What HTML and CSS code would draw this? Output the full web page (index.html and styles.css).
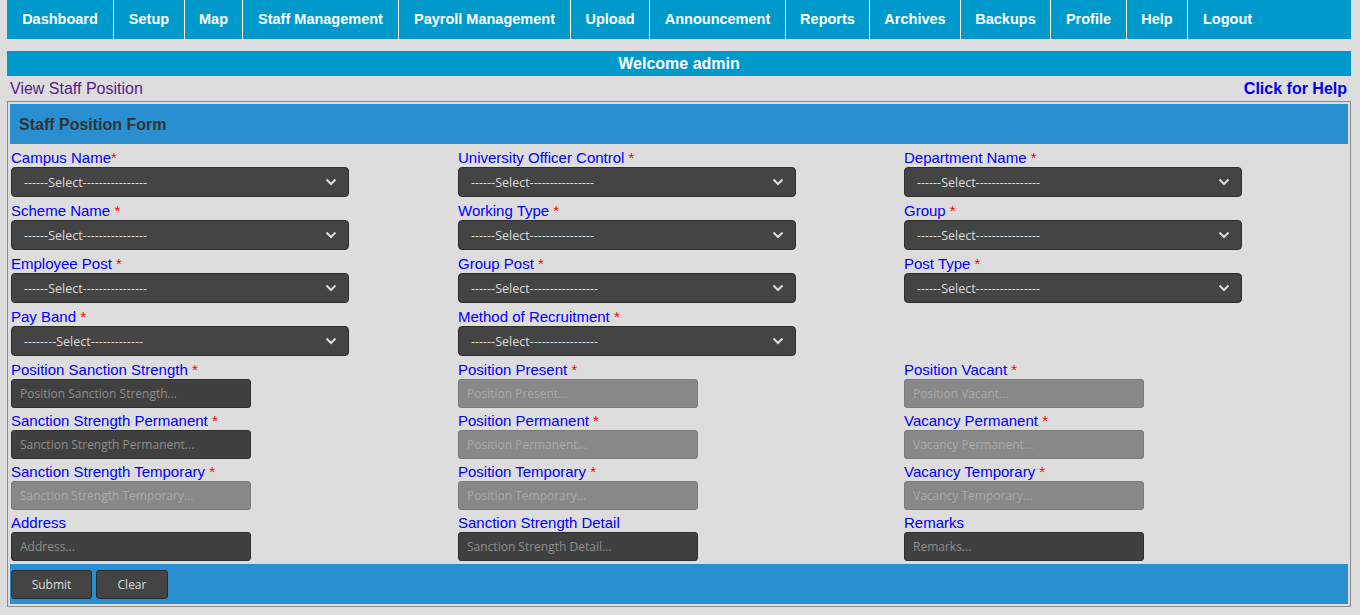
FILE: index.html
```html
<!DOCTYPE html>
<html>
<head>
<meta charset="utf-8">
<title>Staff Position</title>
<link rel="stylesheet" href="styles.css">
</head>
<body>
<div class="wrap">
  <ul class="nav">
    <li class="n-dash">Dashboard</li><li class="n-setup">Setup</li><li class="n-map">Map</li><li class="n-staff">Staff Management</li><li class="n-pay">Payroll Management</li><li class="n-up">Upload</li><li class="n-ann">Announcement</li><li class="n-rep">Reports</li><li class="n-arc">Archives</li><li class="n-bak">Backups</li><li class="n-pro">Profile</li><li class="n-help">Help</li><li class="n-out">Logout</li>
  </ul>
  <div class="welcome">Welcome admin</div>
  <div class="subbar">
    <span class="view">View Staff Position</span>
    <span class="help">Click for Help</span>
  </div>
  <div class="formbox">
    <div class="fhead">Staff Position Form</div>
    <div class="grid">
      <div class="field"><label class="lbl-s">Campus Name<span class="req">*</span></label><select class="sel"><option>------Select----------------</option></select></div>
      <div class="field"><label class="lbl-s">University Officer Control <span class="req">*</span></label><select class="sel"><option>------Select----------------</option></select></div>
      <div class="field"><label class="lbl-s">Department Name <span class="req">*</span></label><select class="sel"><option>------Select----------------</option></select></div>

      <div class="field"><label class="lbl-s">Scheme Name <span class="req">*</span></label><select class="sel"><option>------Select----------------</option></select></div>
      <div class="field"><label class="lbl-s">Working Type <span class="req">*</span></label><select class="sel"><option>------Select----------------</option></select></div>
      <div class="field"><label class="lbl-s">Group <span class="req">*</span></label><select class="sel"><option>------Select----------------</option></select></div>

      <div class="field"><label class="lbl-s">Employee Post <span class="req">*</span></label><select class="sel"><option>------Select----------------</option></select></div>
      <div class="field"><label class="lbl-s">Group Post <span class="req">*</span></label><select class="sel"><option>------Select-----------------</option></select></div>
      <div class="field"><label class="lbl-s">Post Type <span class="req">*</span></label><select class="sel"><option>------Select----------------</option></select></div>

      <div class="field"><label class="lbl-s">Pay Band <span class="req">*</span></label><select class="sel"><option>--------Select-------------</option></select></div>
      <div class="field"><label class="lbl-s">Method of Recruitment <span class="req">*</span></label><select class="sel"><option>------Select-----------------</option></select></div>
      <div class="field"></div>

      <div class="field"><label class="lbl-s">Position Sanction Strength <span class="req">*</span></label><input class="inp" placeholder="Position Sanction Strength..."></div>
      <div class="field"><label class="lbl-s">Position Present <span class="req">*</span></label><input class="inp off" placeholder="Position Present..."></div>
      <div class="field"><label class="lbl-s">Position Vacant <span class="req">*</span></label><input class="inp off" placeholder="Position Vacant..."></div>

      <div class="field"><label class="lbl-i">Sanction Strength Permanent <span class="req">*</span></label><input class="inp" placeholder="Sanction Strength Permanent..."></div>
      <div class="field"><label class="lbl-i">Position Permanent <span class="req">*</span></label><input class="inp off" placeholder="Position Permanent..."></div>
      <div class="field"><label class="lbl-i">Vacancy Permanent <span class="req">*</span></label><input class="inp off" placeholder="Vacancy Permanent..."></div>

      <div class="field"><label class="lbl-i">Sanction Strength Temporary <span class="req">*</span></label><input class="inp off" placeholder="Sanction Strength Temporary..."></div>
      <div class="field"><label class="lbl-i">Position Temporary <span class="req">*</span></label><input class="inp off" placeholder="Position Temporary..."></div>
      <div class="field"><label class="lbl-i">Vacancy Temporary <span class="req">*</span></label><input class="inp off" placeholder="Vacancy Temporary..."></div>

      <div class="field"><label class="lbl-i">Address</label><input class="inp" placeholder="Address..."></div>
      <div class="field"><label class="lbl-i">Sanction Strength Detail</label><input class="inp" placeholder="Sanction Strength Detail..."></div>
      <div class="field"><label class="lbl-i">Remarks</label><input class="inp" placeholder="Remarks..."></div>
    </div>
    <div class="ffoot">
      <button class="btn btn-submit">Submit</button>
      <button class="btn btn-clear">Clear</button>
    </div>
  </div>
</div>
</body>
</html>
```
FILE: styles.css
```css
html, body {
  margin: 0;
  padding: 0;
  background: #dddddd;
  font-family: "Liberation Sans", Arial, sans-serif;
}
.wrap {
  width: 1344px;
  margin-left: 7px;
}
.nav {
  list-style: none;
  margin: 0;
  padding: 0;
  display: flex;
  height: 39px;
  background: #0099cc;
}
.nav li {
  line-height: 39px;
  font-size: 14.5px;
  font-weight: bold;
  color: #ffffff;
  border-right: 1px solid #ffffff;
  white-space: nowrap;
  text-align: center;
  flex: none;
}
.nav .n-dash { width: 106px; }
.nav .n-setup { width: 70px; }
.nav .n-map { width: 57px; }
.nav .n-staff { width: 155px; }
.nav .n-pay { width: 171px; }
.nav .n-up { width: 78px; }
.nav .n-ann { width: 135px; }
.nav .n-rep { width: 83px; }
.nav .n-arc { width: 90px; }
.nav .n-bak { width: 89px; }
.nav .n-pro { width: 75px; }
.nav .n-help { width: 60px; }
.nav .n-out {
  border-right: none;
  text-align: left;
  padding-left: 15px;
}
.welcome {
  margin-top: 12px;
  height: 25px;
  line-height: 25px;
  background: #0099cc;
  color: #ffffff;
  font-weight: bold;
  font-size: 16px;
  text-align: center;
}
.subbar {
  display: flex;
  justify-content: space-between;
  padding: 4px 4px 3px 3px;
  line-height: 18px;
  font-size: 16px;
}
.view {
  color: #551a8b;
}
.help {
  color: #0000ee;
  font-weight: bold;
}
.formbox {
  border: 1px solid #8a8a8a;
  padding: 2px;
}
.fhead {
  height: 40px;
  box-sizing: border-box;
  padding: 1px 0 0 9px;
  line-height: 39px;
  background: #298fd0;
  color: #333333;
  font-weight: bold;
  font-size: 16px;
}
.grid {
  display: grid;
  grid-template-columns: 447px 446px 1fr;
  row-gap: 5px;
  padding: 5px 0 3px 1px;
}
.field {
  display: flex;
  flex-direction: column;
  align-items: flex-start;
}
.field label {
  display: block;
  color: #0000ff;
  font-size: 15px;
}
.lbl-s {
  height: 18px;
  line-height: 18px;
}
.lbl-i {
  height: 17px;
  line-height: 15px;
}
.req {
  color: #ff0000;
}
.sel {
  -webkit-appearance: none;
  appearance: none;
  width: 338px;
  height: 30px;
  margin: 0;
  padding: 0 30px 0 12px;
  box-sizing: border-box;
  border: 1px solid #2e2e2e;
  border-radius: 4px;
  background: #444444 url("data:image/svg+xml,%3Csvg xmlns='http://www.w3.org/2000/svg' width='12' height='8' viewBox='0 0 12 8'%3E%3Cpath d='M1.5 1.5 L6 6 L10.5 1.5' fill='none' stroke='%23dddddd' stroke-width='2'/%3E%3C/svg%3E") no-repeat right 11px center;
  color: #dddddd;
  font-family: "Open Sans", "Noto Sans", sans-serif;
  font-size: 12.5px;
  outline: none;
}
.inp {
  width: 240px;
  height: 29px;
  margin: 0;
  padding: 0 8px;
  box-sizing: border-box;
  border: 1px solid #2e2e2e;
  border-radius: 3px;
  background: #404040;
  color: #dddddd;
  font-family: "Open Sans", "Noto Sans", sans-serif;
  font-size: 12px;
  outline: none;
}
.inp::placeholder {
  color: #8e8e8e;
  opacity: 1;
}
.inp.off {
  background: #888888;
  border-color: #7a7a7a;
}
.inp.off::placeholder {
  color: #aaaaaa;
}
.ffoot {
  height: 40px;
  background: #298fd0;
  display: flex;
  align-items: flex-start;
  gap: 4px;
  padding: 6px 0 0 1px;
  box-sizing: border-box;
}
.btn {
  height: 29px;
  margin: 0;
  padding: 0;
  border: 1px solid #2a2a2a;
  border-radius: 3px;
  background: #444444;
  color: #dddddd;
  font-family: "Open Sans", "Noto Sans", sans-serif;
  font-size: 12px;
}
.btn-submit {
  width: 81px;
}
.btn-clear {
  width: 72px;
}
```
